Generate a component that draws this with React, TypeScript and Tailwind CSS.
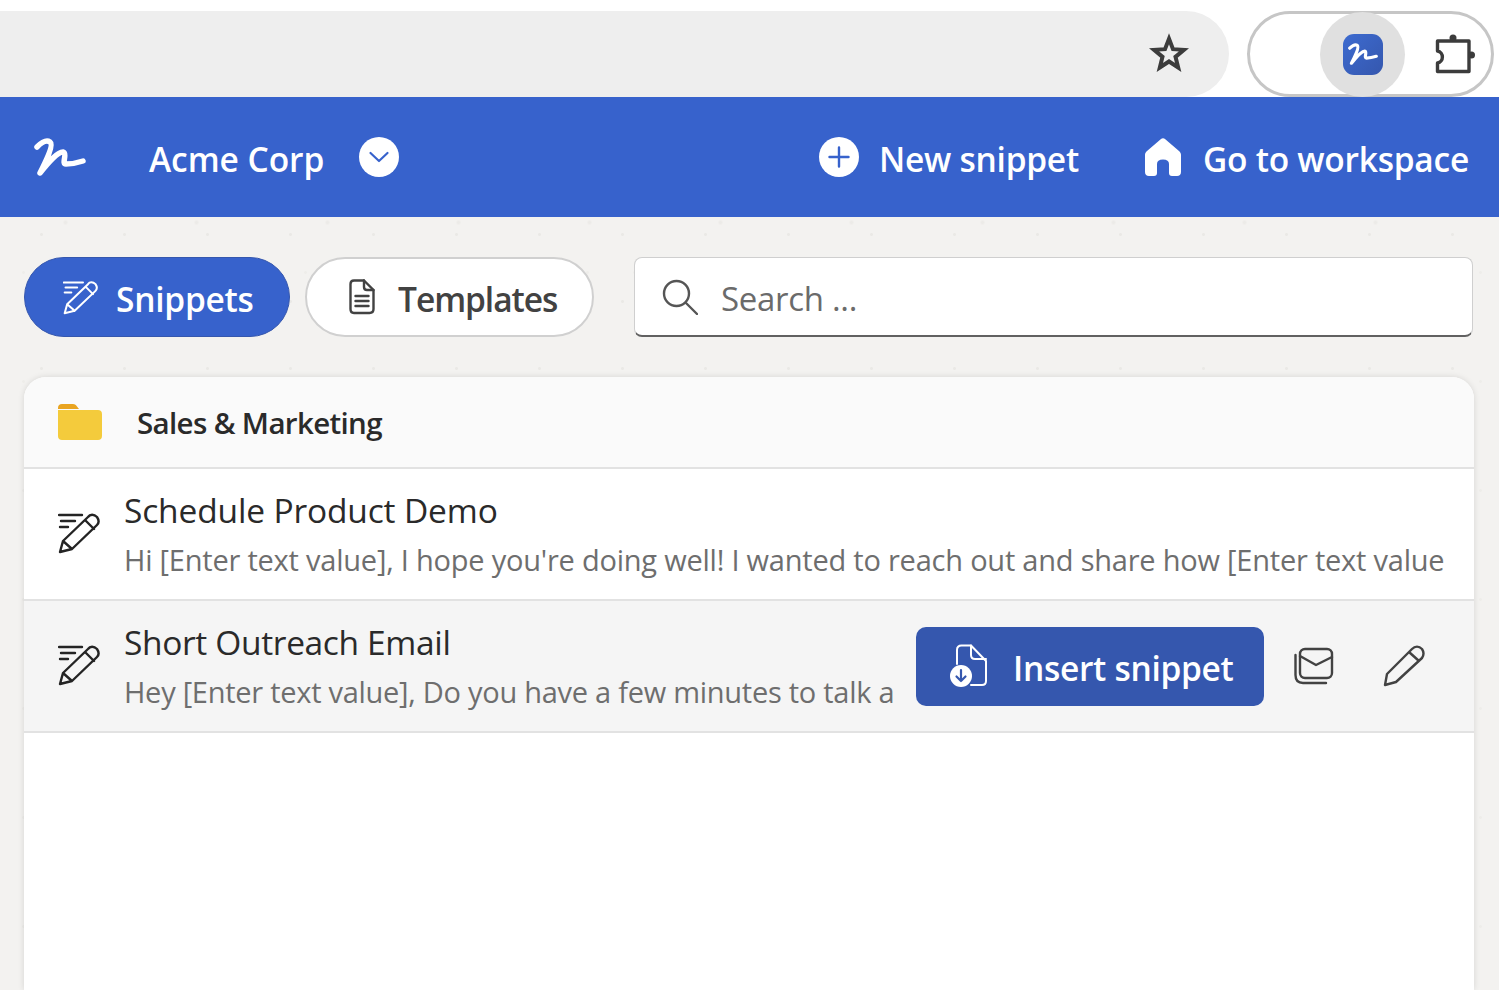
const font = { fontFamily: '"Open Sans", "Noto Sans", sans-serif' }

const Logo = ({ className }: { className?: string }) => (
  <svg viewBox="0 0 52 40" className={className} fill="none" stroke="currentColor" strokeWidth="5.500" strokeLinecap="round" strokeLinejoin="round">
    <path d="M3 10 C8 5 13 3 16 5 C20 8 12 24 6 36 C14 26 23 15 29 15 C34 16 27 27 32 27 C37 27 43 26 49 24" />
  </svg>
)

const SnippetIcon = ({ className }: { className?: string }) => (
  <svg viewBox="0 0 42 42" className={className} fill="none" stroke="currentColor" strokeWidth="2.400" strokeLinecap="round" strokeLinejoin="round">
    <path d="M1 3 H24 M3 9 H17 M2 15 H10" />
    <path d="M2 40 L5 29 L30 5 C32 2 36 2 39 5 C41 8 41 11 39 13 L14 37 Z M27 8 L36 17 M5 29 L14 37" />
  </svg>
)

const TemplateIcon = () => (
  <svg viewBox="0 0 26 36" className="w-[26px] h-[36px] text-[#424242]" fill="none" stroke="currentColor" strokeWidth="2.400" strokeLinejoin="round" strokeLinecap="round">
    <path d="M5 1.500 H15 L24.500 11 V30 C24.500 32.500 23 34 20.500 34 H5 C2.500 34 1.500 32.500 1.500 30 V5 C1.500 2.500 2.500 1.500 5 1.500 Z" />
    <path d="M15 1.500 V8 C15 10 16 11 18 11 H24.500" />
    <path d="M6.500 17 H19.500 M6.500 22 H19.500 M6.500 27 H19.500" />
  </svg>
)

const InsertIcon = () => (
  <svg viewBox="0 0 40 44" className="w-[40px] h-[44px] text-white" fill="none" stroke="currentColor" strokeWidth="2" strokeLinejoin="round" strokeLinecap="round">
    <path d="M8 20 V6 C8 3 9.500 1.500 12.500 1.500 H22 L37 17 V37 C37 40 35.500 41 33 41 H22" />
    <path d="M22 1.500 V11 C22 14 23.500 15 26 15 H37" />
    <circle cx="12" cy="32" r="11" fill="currentColor" stroke="none" />
    <path d="M12 26 V37 M7.500 32.500 L12 37 L16.500 32.500" stroke="#3557ae" strokeWidth="2.200" />
  </svg>
)

const Row = ({ title, body, active, titleClass, bodyClass }: { title: string; body: string; active?: boolean; titleClass: string; bodyClass: string }) => (
  <div className={`h-[132px] shrink-0 flex items-center pl-[34px] border-b-2 border-[#e2e2e2] ${active ? 'bg-[#f5f5f5]' : 'bg-white'}`}>
    <SnippetIcon className="w-[42px] h-[42px] text-[#242424] shrink-0 mt-[-2px]" />
    <div className="ml-[24px] min-w-0 flex-1">
      <div className={`text-[33.500px] leading-[44px] text-[#2a2a2a] mt-[1px] ${titleClass}`}>{title}</div>
      <div className={`text-[29px] leading-[44px] text-[#6e6e6e] mt-[6px] whitespace-nowrap overflow-hidden mr-[30px] ${bodyClass}`}>{body}</div>
    </div>
    {active && (
      <div className="flex items-center shrink-0 pr-[49px] ml-[-10px]">
        <button type="button" className="w-[348px] h-[79px] rounded-[10px] bg-[#3557ae] text-white flex items-center pl-[33px] gap-[24px] text-[33.500px] font-semibold tracking-[-0.3px]">
          <InsertIcon />
          <span className="mt-[4px]">Insert snippet</span>
        </button>
        <svg viewBox="0 0 42 38" className="w-[42px] h-[38px] ml-[29px] text-[#424242]" fill="none" stroke="currentColor" strokeWidth="2.400" strokeLinejoin="round" strokeLinecap="round">
          <rect x="7" y="2" width="32" height="29" rx="5" />
          <path d="M7 9 L23 18 L39 10" />
          <path d="M2.500 8 V28 C2.500 33 5 36 10 36 H33" />
        </svg>
        <svg viewBox="0 0 42 42" className="w-[42px] h-[42px] ml-[48px] text-[#424242]" fill="none" stroke="currentColor" strokeWidth="2.400" strokeLinejoin="round" strokeLinecap="round">
          <path d="M2 40 L4 29 L29 4 C32 1 36 1 39 4 C41 7 41 10 39 13 L13 37 Z M26 7 L36 16" />
        </svg>
      </div>
    )}
  </div>
)

export default function App() {
  return (
    <div style={font} className="w-[1499px] h-[990px] overflow-hidden flex flex-col bg-[#f3f2f0] bg-[radial-gradient(circle,#eae9e6_1px,transparent_2px),radial-gradient(circle,#eeedea_1px,transparent_2px),radial-gradient(circle,#ecebe8_1px,transparent_3px)] bg-[size:83px_67px,47px_109px,131px_89px]">
      {/* browser chrome */}
      <div className="h-[97px] shrink-0 bg-white pt-[11px] flex">
        <div className="w-[1229px] h-[86px] bg-[#eeeeee] rounded-r-[43px] flex items-center justify-end pr-[40px]">
          <svg viewBox="0 0 24 24" className="w-[40px] h-[40px] text-[#3c3c3c] mt-[-2px]" fill="none" stroke="currentColor" strokeWidth="2.400" strokeLinejoin="miter">
            <path d="M12 3.500 L14.400 9.700 L21 10.100 L15.900 14.300 L17.500 20.700 L12 17.100 L6.500 20.700 L8.100 14.300 L3 10.100 L9.600 9.700 Z" />
          </svg>
        </div>
        <div className="ml-[18px] w-[247px] h-[86px] rounded-[43px] border-[3px] border-[#c6c6c6] bg-white flex items-center justify-end pr-[16px]">
          <div className="w-[85px] h-[85px] rounded-full bg-[#e0e0e0] flex items-center justify-center shrink-0 mr-[30px]">
            <div className="w-[40px] h-[41px] rounded-[11px] bg-gradient-to-br from-[#3d6bd0] to-[#3557ae] text-white flex items-center justify-center">
              <Logo className="w-[30px] h-[24px]" />
            </div>
          </div>
          <svg viewBox="0 0 40 40" className="w-[40px] h-[40px] shrink-0 text-[#3c3c3c]" fill="none" stroke="currentColor" strokeWidth="3.400" strokeLinejoin="round">
            <path d="M2.500 7 H34 V37.500 H2.500 V29 C9 28 9 18 2.500 17 Z" />
            <circle cx="18" cy="4" r="3.500" fill="currentColor" stroke="none" />
            <circle cx="36.500" cy="21" r="3.500" fill="currentColor" stroke="none" />
          </svg>
        </div>
      </div>

      {/* header */}
      <div className="h-[120px] shrink-0 bg-[#3762cc] text-white flex items-center pl-[34px] pr-[30px] text-[33.500px] font-semibold tracking-[-0.25px]">
        <Logo className="w-[52px] h-[40px]" />
        <span className="ml-[63px] mt-[4px] tracking-[-0.05px]">Acme Corp</span>
        <span className="ml-[35px] w-[40px] h-[40px] rounded-full bg-white flex items-center justify-center mt-[-1px]">
          <svg viewBox="0 0 24 24" className="w-[24px] h-[24px] text-[#3762cc]" fill="none" stroke="currentColor" strokeWidth="2.200" strokeLinecap="round" strokeLinejoin="round"><path d="M3.500 8 L12 16 L20.500 8" /></svg>
        </span>
        <span className="ml-auto w-[40px] h-[40px] rounded-full bg-white flex items-center justify-center mt-[-1px]">
          <svg viewBox="0 0 24 24" className="w-[24px] h-[24px] text-[#3762cc]" fill="none" stroke="currentColor" strokeWidth="2.400" strokeLinecap="round"><path d="M12 2.500 V21.500 M2.500 12 H21.500" /></svg>
        </span>
        <span className="ml-[20px] mt-[4px]">New snippet</span>
        <svg viewBox="0 0 36 38" className="ml-[66px] w-[36px] h-[38px] text-white mt-[-1px]" fill="currentColor">
          <path d="M16 1 C17 0 19 0 20 1 L34 13 C35.500 14.500 36 15.500 36 17 V34 C36 36.500 34.500 38 32 38 H27 C25 38 24 37 24 35 V26 C24 23 22 21.500 18 21.500 C14 21.500 12 23 12 26 V35 C12 37 11 38 9 38 H4 C1.500 38 0 36.500 0 34 V17 C0 15.500 .5 14.500 2 13 Z" />
        </svg>
        <span className="ml-[22px] mt-[4px]">Go to workspace</span>
      </div>

      {/* tabs and search */}
      <div className="h-[160px] shrink-0 flex items-center pl-[24px] pr-[26px] text-[33.500px] font-semibold">
        <button type="button" className="w-[266px] h-[80px] rounded-[40px] bg-[#3762cc] border border-[#3557ae] text-white flex items-center pl-[38px] gap-[18px] tracking-[-0.25px]">
          <SnippetIcon className="w-[35px] h-[35px]" />
          <span className="mt-[4px]">Snippets</span>
        </button>
        <button type="button" className="ml-[15px] w-[289px] h-[80px] rounded-[40px] bg-white border-2 border-[#d0d0d0] text-[#424242] flex items-center pl-[42px] gap-[23px] tracking-[-1.05px]">
          <TemplateIcon />
          <span className="mt-[4px]">Templates</span>
        </button>
        <div className="ml-[40px] flex-1 h-[80px] rounded-[8px] bg-white border border-[#cfcfcf] border-b-2 border-b-[#616161] flex items-center pl-[27px] gap-[23px] font-normal text-[33px] tracking-[-0.3px] text-[#6b6b6b]">
          <svg viewBox="0 0 36 36" className="w-[36px] h-[36px] text-[#555555]" fill="none" stroke="currentColor" strokeWidth="2.400" strokeLinecap="round">
            <circle cx="14.500" cy="14.500" r="12.500" />
            <path d="M24 24 L35 35" />
          </svg>
          <span className="mt-[4px]">Search ...</span>
        </div>
      </div>

      {/* snippet list */}
      <div className="ml-[24px] mr-[25px] flex-1 rounded-t-[22px] bg-white shadow-[0_0_6px_rgba(0,0,0,0.12)] overflow-hidden flex flex-col">
        <div className="h-[92px] shrink-0 bg-[#fafafa] border-b-2 border-[#e2e2e2] flex items-center pl-[34px]">
          <svg viewBox="0 0 44 36" className="w-[44px] h-[36px]">
            <path d="M0 4 C0 1.500 1.500 0 4 0 H15 C17 0 18 1 19 2.500 L21 5 H0 Z" fill="#e9a420" />
            <path d="M0 6 H40 C42.500 6 44 7.500 44 10 V32 C44 34.500 42.500 36 40 36 H4 C1.500 36 0 34.500 0 32 Z" fill="#f4cb3c" />
          </svg>
          <span className="ml-[35px] mt-[2px] text-[29.500px] font-semibold tracking-[-0.65px] text-[#2a2a2a]">Sales &amp; Marketing</span>
        </div>
        <Row titleClass="tracking-[-0.15px]" bodyClass="tracking-[-0.22px]" title="Schedule Product Demo" body="Hi [Enter text value], I hope you're doing well! I wanted to reach out and share how [Enter text value]" />
        <Row active titleClass="tracking-[-0.35px]" bodyClass="tracking-[-0.27px]" title="Short Outreach Email" body="Hey [Enter text value], Do you have a few minutes to talk a" />
      </div>
    </div>
  )
}
